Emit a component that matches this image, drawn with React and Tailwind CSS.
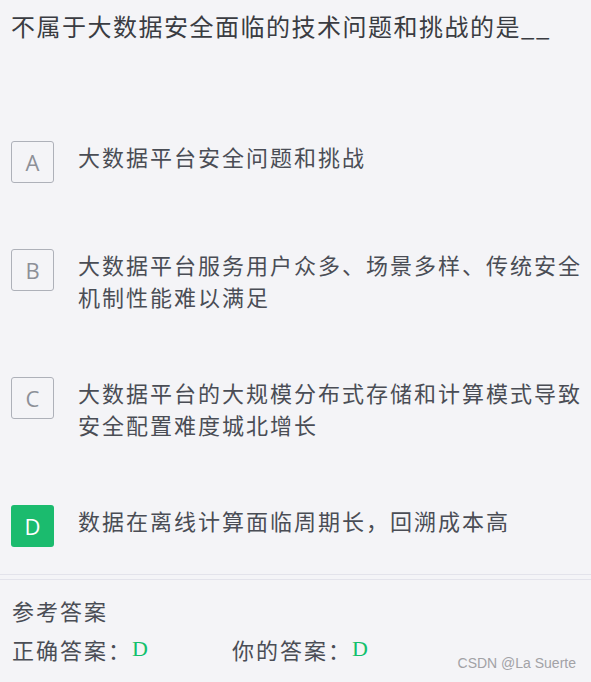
const options = [
  { key: "A", text: "大数据平台安全问题和挑战" },
  { key: "B", text: "大数据平台服务用户众多、场景多样、传统安全机制性能难以满足" },
  { key: "C", text: "大数据平台的大规模分布式存储和计算模式导致安全配置难度城北增长" },
  { key: "D", text: "数据在离线计算面临周期长，回溯成本高", selected: true },
]

function Badge({ letter, selected }) {
  if (selected) {
    return (
      <div className="w-[43px] h-[42px] shrink-0 rounded-[3px] bg-[#1bbb6e] flex items-center justify-center text-white text-[22px] font-['Open_Sans',sans-serif]">
        {letter}
      </div>
    )
  }
  return (
    <div className="w-[43px] h-[42px] shrink-0 rounded-[3px] border border-[#aeb1b9] flex items-center justify-center text-[#8d9098] text-[22px] font-['Open_Sans',sans-serif]">
      {letter}
    </div>
  )
}

export default function App() {
  return (
    <div className="relative w-[591px] h-[682px] overflow-hidden bg-[#f4f4f7] font-['Noto_Sans_CJK_SC',sans-serif]">
      <div className="pl-[11px] pt-[8px] text-[24px] leading-[36px] tracking-[1.5px] text-[#3a3c42]">
        不属于大数据安全面临的技术问题和挑战的是__
      </div>

      <div className="mt-[97px] flex flex-col gap-[62px] pl-[11px] pr-[6px]">
        {options.map((o) => (
          <div key={o.key} className="flex items-start gap-[24px] min-h-[46px]">
            <Badge letter={o.key} selected={o.selected} />
            <div className="-mt-[1px] pb-[3px] text-[22px] leading-[32px] tracking-[2px] text-[#4a4d55]">
              {o.text}
            </div>
          </div>
        ))}
      </div>

      <div className="mt-[23px] border-t border-[#e3e3eb]" />
      <div className="mt-[4px] border-t border-[#e3e3eb]" />

      <div className="pl-[12px] pt-[14px] text-[22px] leading-[32px] tracking-[2px] text-[#4a4d55]">
        <div>参考答案</div>
        <div className="mt-[7px] flex">
          <div className="w-[220px]">
            正确答案：
            <span className="relative -top-[3px] font-['Liberation_Serif',serif] text-[22px] text-[#12c06c] tracking-normal">D</span>
          </div>
          <div>
            你的答案：
            <span className="relative -top-[3px] font-['Liberation_Serif',serif] text-[22px] text-[#12c06c] tracking-normal">D</span>
          </div>
        </div>
      </div>

      <div className="absolute right-[15px] bottom-[8px] text-[14px] text-[#a2a2a6] font-['Liberation_Sans',sans-serif]">
        CSDN @La Suerte
      </div>
    </div>
  )
}
